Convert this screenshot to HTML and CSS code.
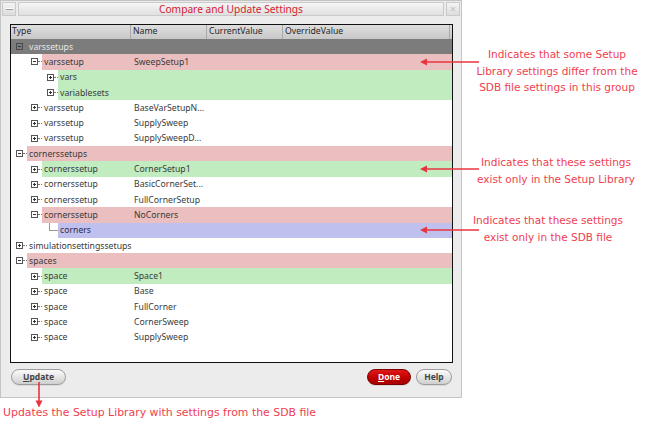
FILE: index.html
```html
<!DOCTYPE html>
<html>
<head>
<meta charset="utf-8">
<link rel="stylesheet" href="styles.css">
</head>
<body>
<div class="page">
  <div class="dialog">
    <div class="titlebar">
      <div class="tb-btn tb-min"><span class="min-bar"></span></div>
      <div class="tb-title">Compare and Update Settings</div>
      <div class="tb-btn tb-close">×</div>
    </div>
    <div class="frame">
      <div class="header">
        <div class="hcell c-type">Type</div>
        <div class="hcell c-name">Name</div>
        <div class="hcell c-cur">CurrentValue</div>
        <div class="hcell c-ovr">OverrideValue</div>
        <div class="hcell c-end"></div>
      </div>
      <div class="rows">
        <div class="row l0 dark"><div class="gut"><span class="exp minus"></span><span class="dot"></span></div><div class="cells"><span class="t">varssetups</span><span class="n"></span></div></div>
        <div class="row l1 pink"><div class="gut"><span class="exp minus"></span><span class="dot"></span></div><div class="cells"><span class="t">varssetup</span><span class="n">SweepSetup1</span></div></div>
        <div class="row l2 green"><div class="gut"><span class="exp"></span><span class="dot"></span></div><div class="cells"><span class="t">vars</span><span class="n"></span></div></div>
        <div class="row l2 green"><div class="gut"><span class="exp"></span><span class="dot"></span></div><div class="cells"><span class="t">variablesets</span><span class="n"></span></div></div>
        <div class="row l1"><div class="gut"><span class="exp"></span><span class="dot"></span></div><div class="cells"><span class="t">varssetup</span><span class="n">BaseVarSetupN...</span></div></div>
        <div class="row l1"><div class="gut"><span class="exp"></span><span class="dot"></span></div><div class="cells"><span class="t">varssetup</span><span class="n">SupplySweep</span></div></div>
        <div class="row l1"><div class="gut"><span class="exp"></span><span class="dot"></span></div><div class="cells"><span class="t">varssetup</span><span class="n">SupplySweepD...</span></div></div>
        <div class="row l0 pink"><div class="gut"><span class="exp minus"></span><span class="dot"></span></div><div class="cells"><span class="t">cornerssetups</span><span class="n"></span></div></div>
        <div class="row l1 green"><div class="gut"><span class="exp"></span><span class="dot"></span></div><div class="cells"><span class="t">cornerssetup</span><span class="n">CornerSetup1</span></div></div>
        <div class="row l1"><div class="gut"><span class="exp"></span><span class="dot"></span></div><div class="cells"><span class="t">cornerssetup</span><span class="n">BasicCornerSet...</span></div></div>
        <div class="row l1"><div class="gut"><span class="exp"></span><span class="dot"></span></div><div class="cells"><span class="t">cornerssetup</span><span class="n">FullCornerSetup</span></div></div>
        <div class="row l1 pink"><div class="gut"><span class="exp minus"></span><span class="dot"></span></div><div class="cells"><span class="t">cornerssetup</span><span class="n">NoCorners</span></div></div>
        <div class="row l2 blue"><div class="gut"><span class="leaf"></span></div><div class="cells"><span class="t">corners</span><span class="n"></span></div></div>
        <div class="row l0"><div class="gut"><span class="exp"></span><span class="dot"></span></div><div class="cells"><span class="t">simulationsettingssetups</span><span class="n"></span></div></div>
        <div class="row l0 pink"><div class="gut"><span class="exp minus"></span><span class="dot"></span></div><div class="cells"><span class="t">spaces</span><span class="n"></span></div></div>
        <div class="row l1 green"><div class="gut"><span class="exp"></span><span class="dot"></span></div><div class="cells"><span class="t">space</span><span class="n">Space1</span></div></div>
        <div class="row l1"><div class="gut"><span class="exp"></span><span class="dot"></span></div><div class="cells"><span class="t">space</span><span class="n">Base</span></div></div>
        <div class="row l1"><div class="gut"><span class="exp"></span><span class="dot"></span></div><div class="cells"><span class="t">space</span><span class="n">FullCorner</span></div></div>
        <div class="row l1"><div class="gut"><span class="exp"></span><span class="dot"></span></div><div class="cells"><span class="t">space</span><span class="n">CornerSweep</span></div></div>
        <div class="row l1"><div class="gut"><span class="exp"></span><span class="dot"></span></div><div class="cells"><span class="t">space</span><span class="n">SupplySweep</span></div></div>
      </div>
    </div>
    <div class="buttons">
      <div class="btn btn-update"><u>U</u>pdate</div>
      <div class="btn btn-done"><u>D</u>one</div>
      <div class="btn btn-help">Help</div>
    </div>
  </div>

  <div class="note n1">Indicates that some Setup<br>Library settings differ from the<br>SDB file settings in this group</div>
  <div class="note n2">Indicates that these settings<br>exist only in the Setup Library</div>
  <div class="note n3">Indicates that these settings<br>exist only in the SDB file</div>
  <div class="note n4">Updates the Setup Library with settings from the SDB file</div>

  <svg class="arrows" width="655" height="437" viewBox="0 0 655 437">
    <g stroke="#e8343f" stroke-width="1.6" fill="none">
      <line x1="425" y1="62" x2="479" y2="62"/>
      <line x1="425" y1="169" x2="479" y2="169"/>
      <line x1="425" y1="230" x2="479" y2="230"/>
      <line x1="39" y1="382" x2="39" y2="402"/>
    </g>
    <g fill="#e8343f">
      <polygon points="420,62 427,58.5 427,65.5"/>
      <polygon points="420,169 427,165.5 427,172.5"/>
      <polygon points="420,230 427,226.5 427,233.5"/>
      <polygon points="39,407.5 35.5,400.5 42.5,400.5"/>
    </g>
  </svg>
</div>
</body>
</html>
```

FILE: styles.css
```css
* { box-sizing: border-box; }
html, body { margin: 0; padding: 0; background: #fff; }
body {
  font-family: "Noto Sans", "DejaVu Sans", sans-serif;
  width: 655px;
  height: 437px;
  overflow: hidden;
}
.page { position: relative; width: 655px; height: 437px; }

.dialog {
  width: 462px;
  height: 398px;
  background: #ececec;
  border: 1px solid #c4c4c4;
  display: flex;
  flex-direction: column;
}

/* title bar */
.titlebar {
  display: flex;
  gap: 2px;
  padding: 1px 1px 0 1px;
  height: 16px;
  flex: none;
}
.tb-btn {
  width: 14px;
  height: 14px;
  flex: none;
  border: 1px solid #cacaca;
  background: linear-gradient(#f4f4f4, #dcdcdc);
  display: flex;
  align-items: center;
  justify-content: center;
}
.min-bar {
  display: block;
  width: 7px;
  height: 2px;
  background: #fff;
  border-bottom: 1px solid #9a9a9a;
}
.tb-close {
  color: #c4c4c4;
  font-size: 11px;
  line-height: 12px;
}
.tb-title {
  flex: 1;
  height: 14px;
  border: 1px solid #cacaca;
  background: linear-gradient(#f5f5f5, #e0e0e0);
  color: #d4222e;
  font-size: 10.2px;
  line-height: 12px;
  text-align: center;
  white-space: nowrap;
}

/* tree table frame */
.frame {
  margin: 7px 8px 0 9px;
  height: 339px;
  flex: none;
  border: 1px solid #111;
  background: #fff;
  display: flex;
  flex-direction: column;
}
.header {
  display: flex;
  height: 14px;
  flex: none;
  background: linear-gradient(#dedede, #c8c8c8);
  font-size: 8.7px;
  line-height: 13px;
  color: #262626;
}
.hcell {
  border-right: 1px solid #a9a9a9;
  padding-left: 2px;
  white-space: nowrap;
  overflow: hidden;
}
.c-type { width: 120px; padding-left: 1px; }
.c-name { width: 76px; }
.c-cur { width: 76px; }
.c-ovr { width: 167px; }
.c-end { flex: 1; border-right: none; }

.rows { display: flex; flex-direction: column; }
.row {
  display: flex;
  height: 15.3px;
  flex: none;
  font-size: 8.7px;
  color: #3a3a3a;
}
.gut {
  flex: none;
  display: flex;
  align-items: center;
  justify-content: flex-end;
}
.l0 .gut { width: 16px; }
.l1 .gut { width: 31px; }
.l2 .gut { width: 47px; }

.exp {
  position: relative;
  width: 7px;
  height: 7px;
  flex: none;
  border: 1px solid #555;
}
.exp::before {
  content: "";
  position: absolute;
  left: 1px;
  top: 2px;
  width: 3px;
  height: 1px;
  background: #333;
}
.exp::after {
  content: "";
  position: absolute;
  left: 2px;
  top: 1px;
  width: 1px;
  height: 3px;
  background: #333;
}
.exp.minus::after { display: none; }
.dot {
  width: 4px;
  flex: none;
  border-top: 1px dotted #777;
}
.leaf {
  align-self: flex-start;
  width: 9px;
  height: 8px;
  flex: none;
  border-left: 1px solid #999;
  border-bottom: 1px solid #999;
}

.cells {
  flex: 1;
  display: flex;
  align-items: center;
  white-space: nowrap;
}
.t { padding-left: 2px; flex: none; }
.l0 .t { width: 105px; }
.l1 .t { width: 90px; }
.l2 .t { width: 74px; }
.n { padding-left: 2px; flex: 1; }

.dark { background: #7c7c7c; color: #e6e6e6; }
.dark .exp { border-color: #4a4a4a; }
.pink .cells { background: #ebbfbf; }
.green .cells { background: #c0ecc0; }
.blue .cells { background: #c0c0ee; color: #2e2e4a; }

/* buttons */
.buttons {
  display: flex;
  gap: 5px;
  margin-top: 6px;
  padding: 0 9px 0 10px;
  flex: none;
}
.btn {
  height: 16px;
  border-radius: 8px;
  border: 1px solid #9d9d9d;
  background: linear-gradient(#fafafa, #e6e6e6 50%, #cfcfcf);
  font-size: 8.5px;
  font-weight: 700;
  line-height: 14px;
  text-align: center;
  color: #444;
  box-shadow: 0 1px 0 rgba(0,0,0,0.08);
}
.btn u { text-decoration-thickness: 1px; text-underline-offset: 1px; }
.btn-update { width: 55px; }
.btn-done {
  width: 44px;
  margin-left: auto;
  border-color: #7a0000;
  background: linear-gradient(#e01818, #c00000 55%, #a80000);
  color: #fff;
}
.btn-help { width: 36px; }

/* callouts */
.note {
  position: absolute;
  font-family: "DejaVu Sans", sans-serif;
  font-size: 10.5px;
  line-height: 16.7px;
  color: #f0404f;
  text-align: center;
  white-space: nowrap;
}
.n1 { left: 462px; width: 190px; top: 46px; }
.n2 { left: 461px; width: 190px; top: 154px; }
.n3 { left: 453px; width: 190px; top: 212px; }
.n4 { left: 3px; top: 405px; text-align: left; font-size: 10.9px; }

.arrows {
  position: absolute;
  left: 0;
  top: 0;
  pointer-events: none;
}
```
